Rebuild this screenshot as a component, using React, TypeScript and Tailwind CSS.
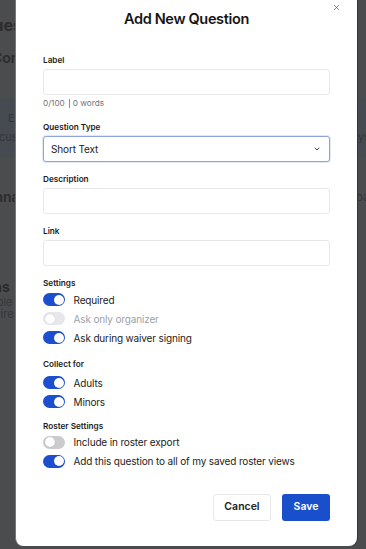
import { ChevronDown, X } from "lucide-react";

type ToggleRow = {
  label: string;
  on: boolean;
  disabled?: boolean;
};

const settings: ToggleRow[] = [
  { label: "Required", on: true },
  { label: "Ask only organizer", on: false, disabled: true },
  { label: "Ask during waiver signing", on: true },
];

const collectFor: ToggleRow[] = [
  { label: "Adults", on: true },
  { label: "Minors", on: true },
];

const roster: ToggleRow[] = [
  { label: "Include in roster export", on: false },
  { label: "Add this question to all of my saved roster views", on: true },
];

function Toggle({ on, disabled }: { on: boolean; disabled?: boolean }) {
  const track = on ? "bg-[#1c4fd0]" : disabled ? "bg-[#e6e7ea]" : "bg-[#cbcbcd]";
  return (
    <span className={`flex h-[13px] w-[22px] shrink-0 items-center rounded-full px-[1.5px] ${track} ${on ? "justify-end" : "justify-start"}`}>
      <span className="h-[10px] w-[10px] rounded-full bg-white shadow-[0_0_1px_rgba(0,0,0,0.25)]" />
    </span>
  );
}

function Rows({ rows }: { rows: ToggleRow[] }) {
  return (
    <div className="flex flex-col">
      {rows.map((r, i) => (
        <div key={i} className="flex h-[19px] items-center gap-[8.5px]">
          <Toggle on={r.on} disabled={r.disabled} />
          <span className={`text-[10px] leading-none tracking-[-0.15px] ${r.disabled ? "text-[#9ea1a8]" : "text-[#222]"}`}>{r.label}</span>
        </div>
      ))}
    </div>
  );
}

function Heading({ children }: { children: string }) {
  return <div className="text-[8.2px] font-semibold leading-[12px] text-[#1c1c1c]">{children}</div>;
}

function Field({ label }: { label: string }) {
  return (
    <div className="mt-[11px] flex flex-col gap-[3px]">
      <Heading>{label}</Heading>
      <div className="h-[26px] rounded-[3px] border border-[#e7e8eb] bg-white" />
    </div>
  );
}

export default function App() {
  return (
    <div className="relative h-[549px] w-[366px] overflow-hidden bg-[#4b4c4e] font-['Inter',sans-serif]">
      {/* dimmed page behind the dialog */}
      <div className="flex flex-col text-[#2a2b2d]">
        <div className="-ml-[19px] mt-[14px] h-[22px] text-[16px] font-bold leading-[22px]">Questions</div>
        <div className="-ml-[8px] mt-[12px] h-[20px] text-[14px] font-semibold leading-[20px]">Connections</div>
        <div className="mt-[30px] flex h-[59px] flex-col bg-[#464a51] pt-[13px] text-[#33353a]">
          <span className="ml-[8px] text-[11px] leading-[14px]">Events</span>
          <div className="mt-[5px] flex justify-between text-[11px] leading-[14px]">
            <span className="-ml-[1px]">custom</span>
            <span className="-mr-[4px]">days</span>
          </div>
        </div>
        <div className="mt-[31px] flex h-[18px] justify-between text-[14px] font-semibold leading-[18px]">
          <span className="-ml-[58px]">Questionnaire</span>
          <span className="-mr-[4px] text-[12px] font-normal text-[#333438]">pa</span>
        </div>
        <div className="-ml-[60px] mt-[72px] h-[18px] text-[14px] font-bold leading-[18px]">Questions</div>
        <div className="-ml-[22px] text-[11px] leading-[12px] text-[#35373b]">Visible</div>
        <div className="-ml-[26px] text-[11px] leading-[12px] text-[#35373b]">Require</div>
      </div>

      {/* dialog */}
      <div className="absolute left-[15px] top-0 flex w-[342px] flex-col rounded-b-[8px] border-l border-[#77787a] bg-white pb-[25px] pl-[27px] pr-[27px] pt-[9px] shadow-[1px_0_0_#333]">
        <button className="absolute right-[16px] top-[3px] text-[#444]">
          <X size={9} strokeWidth={1.6} />
        </button>
        <h2 className="text-center text-[14.5px] font-semibold leading-[20px] tracking-[-0.35px] text-[#161616]">Add New Question</h2>

        <div className="mt-[25px] flex flex-col gap-[3px]">
          <Heading>Label</Heading>
          <div className="h-[26px] rounded-[3px] border border-[#e7e8eb] bg-white" />
        </div>
        <div className="mt-[2px] flex items-center text-[8.2px] leading-[12px] text-[#6f7278]">
          <span>0/100</span>
          <span className="ml-[4px] h-[9px] border-l border-[#8a8d93] pl-[3px]" />
          <span>0 words</span>
        </div>

        <div className="mt-[12px] flex flex-col gap-[3px]">
          <Heading>Question Type</Heading>
          <div className="flex h-[26px] items-center justify-between rounded-[3px] border border-[#8fa3e0] bg-white pl-[7px] pr-[8px] shadow-[0_0_0_1px_rgba(143,163,224,0.25)]">
            <span className="text-[10px] tracking-[-0.15px] text-[#222]">Short Text</span>
            <ChevronDown size={8} strokeWidth={2.8} className="text-[#333]" />
          </div>
        </div>

        <Field label="Description" />
        <Field label="Link" />

        <div className="mt-[11px]">
          <Heading>Settings</Heading>
          <div className="mt-[1px]">
            <Rows rows={settings} />
          </div>
        </div>

        <div className="mt-[11px]">
          <Heading>Collect for</Heading>
          <div className="mt-[3px]">
            <Rows rows={collectFor} />
          </div>
        </div>

        <div className="mt-[9px]">
          <Heading>Roster Settings</Heading>
          <div className="mt-[0.5px]">
            <Rows rows={roster} />
          </div>
        </div>

        <div className="mt-[23px] flex justify-end gap-[11px]">
          <button className="h-[27px] w-[58px] rounded-[3px] border border-[#e7e8eb] bg-white text-[10.5px] font-semibold text-[#222]">
            Cancel
          </button>
          <button className="h-[27px] w-[48px] rounded-[3px] bg-[#1a4fcb] text-[10.5px] font-semibold text-white">
            Save
          </button>
        </div>
      </div>
    </div>
  );
}
